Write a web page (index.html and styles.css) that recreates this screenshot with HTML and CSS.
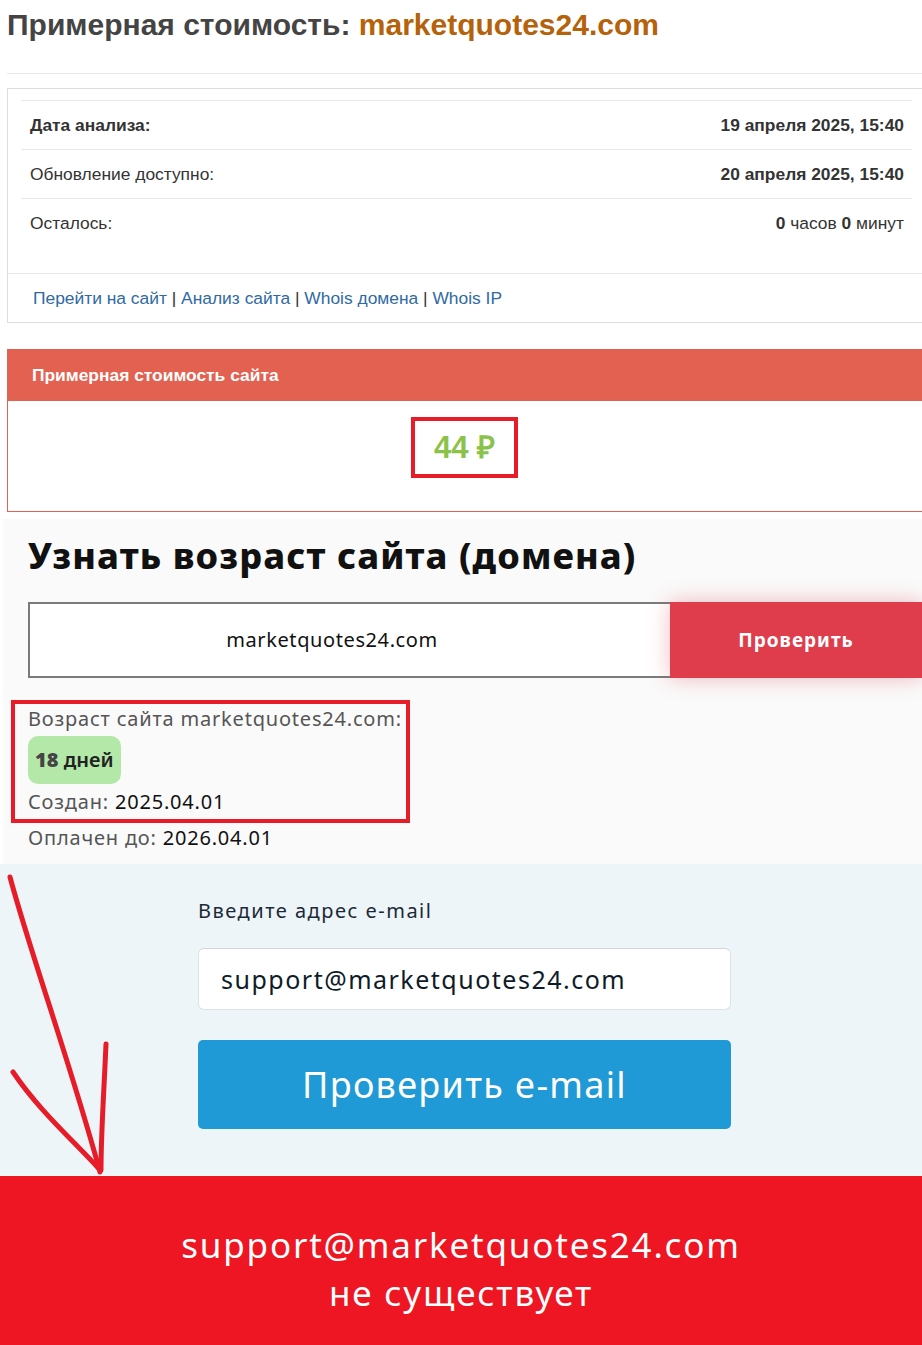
FILE: index.html
```html
<!DOCTYPE html>
<html lang="ru">
<head>
    <meta charset="UTF-8">
    <meta name="viewport" content="width=device-width, initial-scale=1.0">
    <title>Примерная стоимость: marketquotes24.com</title>
    <link rel="stylesheet" href="styles.css">
</head>
<body>
<div class="page">
    <!-- заголовок -->
    <h1 class="title">Примерная стоимость: <span class="title-domain">marketquotes24.com</span></h1>
    <hr class="title-line">

    <!-- карточка с датами -->
    <div class="info-card">
        <table class="info-table">
            <tr>
                <td><b>Дата анализа:</b></td>
                <td class="right"><b>19 апреля 2025, 15:40</b></td>
            </tr>
            <tr>
                <td>Обновление доступно:</td>
                <td class="right"><b>20 апреля 2025, 15:40</b></td>
            </tr>
            <tr>
                <td>Осталось:</td>
                <td class="right"><b>0</b> часов <b>0</b> минут</td>
            </tr>
        </table>
        <div class="info-links">
            <a href="#">Перейти на сайт</a> | <a href="#">Анализ сайта</a> | <a href="#">Whois домена</a> | <a href="#">Whois IP</a>
        </div>
    </div>

    <!-- стоимость -->
    <div class="price-panel">
        <div class="price-head">Примерная стоимость сайта</div>
        <div class="price-body">
            <span class="price-mark">44 ₽</span>
        </div>
    </div>

    <!-- возраст домена -->
    <section class="age">
        <h2 class="age-title">Узнать возраст сайта (домена)</h2>
        <form class="age-form">
            <input class="age-input" type="text" value="marketquotes24.com">
            <button type="button" class="age-btn">Проверить</button>
        </form>
        <div class="age-mark">
            <p class="age-line">Возраст сайта marketquotes24.com:</p>
            <span class="age-badge"><b>18</b> дней</span>
            <p class="age-line">Создан: <span class="dark">2025.04.01</span></p>
        </div>
        <p class="age-line">Оплачен до: <span class="dark">2026.04.01</span></p>
    </section>

    <!-- проверка e-mail -->
    <section class="email">
        <div class="email-form">
            <label class="email-label" for="email">Введите адрес e-mail</label>
            <input class="email-input" id="email" type="text" value="support@marketquotes24.com">
            <button type="button" class="email-btn">Проверить e-mail</button>
        </div>
    </section>

    <section class="result">
        <p>support@marketquotes24.com<br>не существует</p>
    </section>

    <!-- стрелки -->
    <svg class="arrows" width="130" height="320" viewBox="0 0 130 320">
        <path d="M10 5 C 30 80, 70 190, 100 300" />
        <path d="M13 200 C 40 240, 75 270, 100 298" />
        <path d="M106 172 C 104 220, 101 260, 101 298" />
    </svg>
</div>
</body>
</html>
```

FILE: styles.css
```css
* {
    margin: 0;
    padding: 0;
    box-sizing: border-box;
}

body {
    background: #fff;
    font-family: 'Liberation Sans', Arial, sans-serif;
    overflow-x: hidden;
}

.page {
    position: relative;
    width: 922px;
    overflow: hidden;
}

/* верх */
.title {
    padding: 8px 7px 0;
    font-size: 30px;
    line-height: 33px;
    font-weight: bold;
    color: #444;
}

.title-domain {
    color: #b5620b;
}

.title-line {
    border: none;
    border-top: 1px solid #e8e8e8;
    margin: 32px 0 0 7px;
}

.info-card {
    margin: 14px -4px 0 7px;
    border: 1px solid #ddd;
    padding: 11px 13px 0;
}

.info-table {
    width: 100%;
    border-collapse: collapse;
    font-size: 17.4px;
    color: #333;
}

.info-table td {
    border-top: 1px solid #e8e8e8;
    height: 49px;
    padding: 0 9px;
}

.info-table .right {
    text-align: right;
    padding-right: 8px;
}

.info-links {
    margin: 25px -13px 0;
    border-top: 1px solid #e8e8e8;
    height: 49px;
    line-height: 48px;
    padding-left: 25px;
    font-size: 17.4px;
    color: #333;
}

.info-links a {
    color: #2f6aa3;
    text-decoration: none;
}

.price-panel {
    margin: 26px -4px 0 7px;
}

.price-head {
    background: #e36150;
    color: #fff;
    font-size: 17.4px;
    font-weight: bold;
    height: 52px;
    line-height: 52px;
    padding-left: 25px;
}

.price-body {
    border: 1px solid #e36150;
    border-top: none;
    height: 111px;
    display: flex;
    justify-content: center;
    padding-top: 16px;
    padding-right: 4px;
}

.price-mark {
    border: 4px solid #e61d29;
    width: 107px;
    height: 61px;
    line-height: 53px;
    text-align: center;
    font-size: 31px;
    font-weight: bold;
    color: #8bc34a;
}

/* возраст */
.age {
    margin: 7px 0 0 3px;
    background: #fafafa;
    padding: 14px 0 11px 25px;
    font-family: 'Noto Sans', sans-serif;
}

.age-title {
    font-size: 36px;
    line-height: 46px;
    font-weight: 800;
    letter-spacing: 1.1px;
    color: #111;
}

.age-form {
    display: flex;
    margin-top: 23px;
}

.age-input {
    flex: 0 0 642px;
    height: 76px;
    border: 2px solid #7a7a7a;
    border-right: none;
    background: #fff;
    padding-right: 36px;
    text-align: center;
    font-family: 'Noto Sans', sans-serif;
    font-size: 20px;
    letter-spacing: 0.6px;
    color: #111;
    outline: none;
}

.age-btn {
    flex: 0 0 252px;
    height: 76px;
    border: none;
    background: #e03d4c;
    color: #fff;
    font-family: 'Noto Sans', sans-serif;
    font-size: 19px;
    font-weight: bold;
    letter-spacing: 1px;
    box-shadow: 0 0 20px rgba(224, 61, 76, 0.35);
}

.age-mark {
    width: fit-content;
    margin: 22px 0 0 -17px;
    border: 4px solid #e61d29;
    padding: 0 4px 2px 13px;
}

.age-line {
    font-size: 20px;
    line-height: 30px;
    letter-spacing: 0.8px;
    color: #555;
}

.age-line .dark {
    color: #111;
}

.age-badge {
    display: inline-block;
    margin: 2px 0 3px;
    background: #b3e8a8;
    border-radius: 10px;
    padding: 0 7px;
    height: 48px;
    line-height: 48px;
    font-size: 20px;
    font-weight: 600;
    color: #222;
}

.age-badge b {
    color: #444;
}

/* e-mail */
.email {
    background: #eef5f9;
    padding: 32px 0 47px 198px;
    font-family: 'Noto Sans', sans-serif;
}

.email-form {
    width: 533px;
    display: flex;
    flex-direction: column;
}

.email-label {
    font-size: 20px;
    line-height: 30px;
    letter-spacing: 1.5px;
    color: #1b2937;
}

.email-input {
    margin-top: 22px;
    height: 62px;
    border: 1px solid #dde2e6;
    border-top-color: #cfd5da;
    border-radius: 6px;
    background: #fff;
    padding-left: 22px;
    font-family: 'Noto Sans', sans-serif;
    font-size: 25px;
    letter-spacing: 1.5px;
    color: #0e1b28;
    outline: none;
}

.email-btn {
    margin-top: 30px;
    height: 89px;
    border: none;
    border-radius: 5px;
    background: #1f9ad6;
    color: #fff;
    font-family: 'Noto Sans', sans-serif;
    font-size: 36px;
    letter-spacing: 1.3px;
}

.result {
    background: #ee1622;
    height: 172px;
    padding-top: 45px;
    text-align: center;
    font-family: 'Noto Sans', sans-serif;
    font-size: 35px;
    line-height: 48px;
    letter-spacing: 1.8px;
    color: #fff;
}

.arrows {
    position: absolute;
    left: 0;
    top: 872px;
}

.arrows path {
    fill: none;
    stroke: #e61d29;
    stroke-width: 5;
    stroke-linecap: round;
}
```
